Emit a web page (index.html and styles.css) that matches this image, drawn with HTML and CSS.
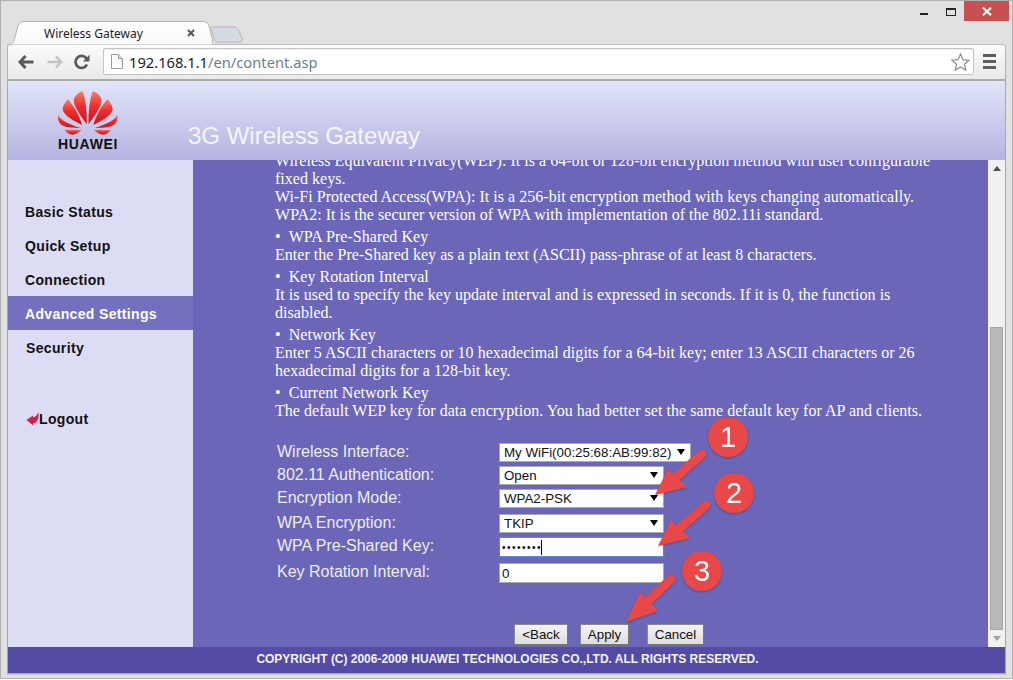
FILE: index.html
```html
<!DOCTYPE html>
<html lang="en">
<head>
<meta charset="utf-8">
<title>Wireless Gateway</title>
<link rel="stylesheet" href="styles.css">
</head>
<body>
<div class="window">
  <div class="titlebar">
    <div class="tabstrip">
      <div class="tab">
        <svg class="tab-shape" width="206" height="24" viewBox="0 0 206 24"><path d="M0.500 24 C6 24 7 20 8 16 L11 5 C12 2 14 0.500 17 0.500 L196 0.500 C199 0.500 201 2 202 5 L205 17 C206 21 206 24 206 24 Z" fill="url(#tabfill)" stroke="#b4b4b4"/><defs><linearGradient id="tabfill" x1="0" y1="0" x2="0" y2="1"><stop offset="0" stop-color="#ffffff"/><stop offset="1" stop-color="#f8f8f8"/></linearGradient></defs></svg>
        <span class="tab-title">Wireless Gateway</span>
        <svg class="tab-close" width="8" height="8" viewBox="0 0 8 8"><path d="M1 1 L7 7 M7 1 L1 7" stroke="#555" stroke-width="2"/></svg>
      </div>
      <svg class="newtab" width="34" height="17" viewBox="0 0 34 17"><path d="M1.500 1 L24 1 C26 1 27 2 28 3.500 L32.500 13 C33 15 32 16 30 16 L8 16 C6 16 5 15 4.500 13.500 L1 3 C0.700 1.700 0.700 1 1.500 1 Z" fill="#d6dae2" stroke="#b8b8b8"/></svg>
    </div>
    <div class="winctrls">
      <span class="ctrl-min"></span>
      <span class="ctrl-max"></span>
      <span class="ctrl-close"><svg width="10" height="9" viewBox="0 0 10 9"><path d="M1 0.800 L9 8.200 M9 0.800 L1 8.200" stroke="#fff" stroke-width="2"/></svg></span>
    </div>
  </div>

  <div class="toolbar">
    <svg class="tool" width="16" height="14" viewBox="0 0 16 14"><path d="M7.500 1 L2 7 L7.500 13 M2.500 7 L15.500 7" fill="none" stroke="#5a5a5a" stroke-width="3"/></svg>
    <svg class="tool tool-fwd" width="16" height="14" viewBox="0 0 16 14"><path d="M9 1.500 L14 7 L9 12.500 M13.500 7 L0.500 7" fill="none" stroke="#c4c4c4" stroke-width="2.600"/></svg>
    <svg class="tool" width="16" height="16" viewBox="0 0 16 16"><path d="M13 10.500 A6 6 0 1 1 12.500 4.500" fill="none" stroke="#5a5a5a" stroke-width="2.800"/><path d="M15.500 0.800 L15.500 7.500 L8.800 7.500 Z" fill="#5a5a5a"/></svg>
    <div class="omnibox">
      <svg class="pageicon" width="12" height="15" viewBox="0 0 12 15"><path d="M1 0.500 L7.500 0.500 L11.500 4.500 L11.500 14.500 L0.500 14.500 L0.500 0.500 Z" fill="#fff" stroke="#9a9a9a"/><path d="M7.500 0.500 L7.500 4.500 L11.500 4.500" fill="#e4e4e4" stroke="#9a9a9a"/></svg>
      <span class="url"><span class="url-host">192.168.1.1</span>/en/content.asp</span>
      <svg class="star" width="19" height="18" viewBox="0 0 19 18"><path d="M9.500 1 L11.900 6.700 L18 7.200 L13.400 11.200 L14.800 17.100 L9.500 14 L4.200 17.100 L5.600 11.200 L1 7.200 L7.100 6.700 Z" fill="#fff" stroke="#8e8e8e" stroke-width="1.200"/></svg>
    </div>
    <div class="hamburger"><i></i><i></i><i></i></div>
  </div>

  <div class="page">
    <header class="banner">
      <div class="brand">
        <svg class="logo" width="60" height="47" viewBox="0 0 180 141">
          <defs>
            <linearGradient id="petal" x1="0" y1="0" x2="0" y2="1"><stop offset="0" stop-color="#f4806c"/><stop offset="0.45" stop-color="#ee2c2c"/><stop offset="1" stop-color="#c8141c"/></linearGradient>
            <g id="half">
              <path d="M86 100 C64 68 41 38 49 21 C54 11 64 3 74 1 C82 23 88 63 86 100 Z"/>
              <path d="M72 102 C46 89 16 73 14 55 C14 45 22 33 30 25 C46 43 64 73 72 102 Z"/>
              <path d="M67 111 C41 102 6 88 0 71 C-2 83 1 95 12 103 C24 110 51 111 67 111 Z"/>
              <path d="M71 116 L20 116 C26 126 38 134 50 130 C58 127 66 121 71 116 Z"/>
            </g>
          </defs>
          <use href="#half" fill="url(#petal)"/>
          <use href="#half" fill="url(#petal)" transform="translate(178 0) scale(-1 1)"/>
        </svg>
        <span class="brand-name">HUAWEI</span>
      </div>
      <h1 class="banner-title">3G Wireless Gateway</h1>
    </header>

    <div class="middle">
      <nav class="sidebar">
        <a class="nav-item">Basic Status</a>
        <a class="nav-item">Quick Setup</a>
        <a class="nav-item">Connection</a>
        <a class="nav-item is-active">Advanced Settings</a>
        <a class="nav-item nudge">Security</a>
        <a class="nav-item logout nudge">
          <svg width="13" height="14" viewBox="0 0 13 14"><path d="M12.500 0 L12.500 4 C12.500 8 10 11 7 11.500 L7 13.500 L0.500 8 L7 3.500 L7 5.500 C9 5.500 11 3 12.500 0 Z" fill="#d81c4c"/></svg>Logout
        </a>
      </nav>

      <main class="content">
        <div class="help">
          <p>Wireless Equivalent Privacy(WEP): It is a 64-bit or 128-bit encryption method with user configurable fixed keys.</p>
          <p>Wi-Fi Protected Access(WPA): It is a 256-bit encryption method with keys changing automatically.</p>
          <p>WPA2: It is the securer version of WPA with implementation of the 802.11i standard.</p>
          <p class="topic">•&nbsp;&nbsp;WPA Pre-Shared Key</p>
          <p>Enter the Pre-Shared key as a plain text (ASCII) pass-phrase of at least 8 characters.</p>
          <p class="topic">•&nbsp;&nbsp;Key Rotation Interval</p>
          <p>It is used to specify the key update interval and is expressed in seconds. If it is 0, the function is disabled.</p>
          <p class="topic">•&nbsp;&nbsp;Network Key</p>
          <p>Enter 5 ASCII characters or 10 hexadecimal digits for a 64-bit key; enter 13 ASCII characters or 26 hexadecimal digits for a 128-bit key.</p>
          <p class="topic">•&nbsp;&nbsp;Current Network Key</p>
          <p>The default WEP key for data encryption. You had better set the same default key for AP and clients.</p>
        </div>

        <form class="settings">
          <label class="lbl">Wireless Interface:</label>
          <div class="pick pick-wide"><select class="ctl"><option>My WiFi(00:25:68:AB:99:82)</option></select></div>
          <label class="lbl">802.11 Authentication:</label>
          <div class="pick"><select class="ctl"><option>Open</option></select></div>
          <label class="lbl">Encryption Mode:</label>
          <div class="pick"><select class="ctl"><option>WPA2-PSK</option></select></div>
          <label class="lbl">WPA Encryption:</label>
          <div class="pick"><select class="ctl"><option>TKIP</option></select></div>
          <label class="lbl">WPA Pre-Shared Key:</label>
          <div class="pick pick-plain"><div class="ctl ctl-focus"><span class="dots">••••••••</span><span class="caret"></span></div></div>
          <label class="lbl">Key Rotation Interval:</label>
          <div class="pick pick-plain"><input class="ctl ctl-text" type="text" value="0"></div>
        </form>

        <div class="actions">
          <button class="btn btn-back" type="button">&lt;Back</button>
          <button class="btn btn-apply" type="button">Apply</button>
          <button class="btn btn-cancel" type="button">Cancel</button>
        </div>
      </main>

      <div class="scrollbar">
        <span class="sb-btn"><i class="tri-up"></i></span>
        <div class="sb-track"><div class="sb-thumb"></div></div>
        <span class="sb-btn sb-btn-down"><i class="tri-down"></i></span>
      </div>
    </div>

    <footer class="copyright">COPYRIGHT (C) 2006-2009 HUAWEI TECHNOLOGIES CO.,LTD. ALL RIGHTS RESERVED.</footer>
  </div>
</div>

<svg class="callouts" width="1013" height="680" viewBox="0 0 1013 680">
  <g class="callout">
    <path d="M702 454 L675 478" stroke="#e84848" stroke-width="9" stroke-linecap="round"/>
    <polygon points="655,495 687,487 668,469" fill="#e84848"/>
    <circle cx="728" cy="437" r="20" fill="#e84848"/>
    <text x="728" y="447" class="num">1</text>
  </g>
  <g class="callout">
    <path d="M706 505 L679 529" stroke="#e84848" stroke-width="9" stroke-linecap="round"/>
    <polygon points="658,546 690,538 671,520" fill="#e84848"/>
    <circle cx="734" cy="493" r="20" fill="#e84848"/>
    <text x="734" y="503" class="num">2</text>
  </g>
  <g class="callout">
    <path d="M671 579 L647 602" stroke="#e84848" stroke-width="9" stroke-linecap="round"/>
    <polygon points="626,622 658,611 640,592" fill="#e84848"/>
    <circle cx="702" cy="571" r="20" fill="#e84848"/>
    <text x="702" y="581" class="num">3</text>
  </g>
</svg>
</body>
</html>
```

FILE: styles.css
```css
* { box-sizing: border-box; }
html, body { margin: 0; padding: 0; height: 100%; overflow: hidden; background: #fff; }
body { font-family: "Liberation Sans", Arial, sans-serif; position: relative; }

.window {
  width: 1013px;
  height: 679px;
  background: #e1e1e1;
  border: 1px solid #b0b0b0;
  display: flex;
  flex-direction: column;
  padding: 0 6px 4px 6px;
}

/* title bar */
.titlebar { height: 43px; display: flex; justify-content: space-between; flex: none; }
.tabstrip { display: flex; align-items: flex-start; padding-top: 20px; }
.tab {
  position: relative;
  width: 206px;
  height: 24px;
  display: flex;
  align-items: center;
  padding: 0 18px 0 37px;
  justify-content: space-between;
}
.tab-shape { position: absolute; left: 0; top: 0; }
.tab-title { position: relative; font: 12px "Noto Sans", "Open Sans", sans-serif; color: #222; }
.tab-close { position: relative; }
.newtab { margin: 5px 0 0 -3px; }

.winctrls { display: flex; align-items: flex-start; margin-right: -3px; }
.ctrl-min { width: 8px; height: 2px; background: #222; margin-top: 12px; }
.ctrl-max { width: 10px; height: 8px; border: 1px solid #222; border-top-width: 2px; margin: 7px 0 0 18px; }
.ctrl-close {
  width: 45px;
  height: 20px;
  background: #c75050;
  margin-left: 8px;
  display: flex;
  align-items: center;
  justify-content: center;
}

/* toolbar */
.toolbar {
  height: 37px;
  flex: none;
  background: linear-gradient(#fbfbfb, #e9e9e9);
  border: 1px solid #b4b4b4;
  border-top-color: #bcbcbc;
  border-bottom-color: #ababab;
  border-bottom-width: 2px;
  border-radius: 3px 3px 0 0;
  display: flex;
  align-items: center;
  padding: 0 9px 1px 10px;
}
.tool { flex: none; margin-right: 12px; }
.tool-fwd { margin-left: 1px; margin-right: 11px; }
.omnibox {
  margin-left: 1px;
  flex: 1;
  height: 27px;
  background: #fff;
  border: 1px solid #c4c4c4;
  border-radius: 2px;
  display: flex;
  align-items: center;
  padding: 0 3px 0 7px;
  box-shadow: inset 0 1px 0 #eee;
}
.pageicon { flex: none; }
.url { flex: 1; margin-left: 6px; font: 14.700px "Noto Sans", "Open Sans", sans-serif; color: #6d7f90; white-space: nowrap; }
.url-host { color: #222; }
.hamburger { width: 13px; margin-left: 9px; display: flex; flex-direction: column; gap: 3px; flex: none; }
.hamburger i { display: block; height: 3px; background: #5e5e5e; }

/* router page */
.page {
  flex: 1;
  display: flex;
  flex-direction: column;
  min-height: 0;
  border: 1px solid #a8a8a8;
  border-top: 0;
  box-shadow: 0 1px 0 #cdcdcd;
}
.banner {
  height: 79px;
  flex: none;
  background: linear-gradient(#e1e5f9, #b6b4e1);
  display: flex;
  padding-left: 50px;
}
.brand { width: 130px; display: flex; flex-direction: column; align-items: flex-start; padding-top: 10px; flex: none; }
.logo { display: block; }
.brand-name { font-size: 14px; font-weight: bold; color: #111; letter-spacing: 0.700px; line-height: 14px; margin-top: -1px; }
.banner-title { margin: 41px 0 0; font-size: 24px; font-weight: normal; color: #f6f6ff; line-height: 28px; }

.middle { flex: 1; display: flex; min-height: 0; }
.sidebar { width: 185px; flex: none; background: #dcdcf4; padding-top: 34px; display: flex; flex-direction: column; }
.nav-item {
  height: 34px;
  flex: none;
  display: flex;
  align-items: center;
  padding: 2px 0 0 17px;
  font-size: 14px;
  font-weight: bold;
  color: #111;
  letter-spacing: 0.350px;
}
.nav-item.is-active { background: #7370c0; color: #fff; }
.nudge { padding-left: 18px; }
.logout { margin-top: 37px; color: #111; }

.content { width: 795px; flex: none; background: #6b66b8; overflow: hidden; padding-left: 82px; color: #fff; }
.help { width: 657px; margin-top: -8px; font: 16px/18px "Liberation Serif", "Times New Roman", serif; letter-spacing: 0.030px; }
.help p { margin: 0; }
.help .topic { margin-top: 4px; }

.settings {
  margin: 23px 0 0 2px;
  display: grid;
  grid-template-columns: 222px 1fr;
  grid-template-rows: 23px 23px 25px 23px 26px 20px;
  align-items: start;
}
.lbl { font-size: 16px; line-height: 17px; color: #eeeeee; }
.pick { position: relative; width: 165px; height: 19px; }
.pick-wide { width: 192px; }
.pick::after {
  content: "";
  position: absolute;
  right: 6px;
  top: 6px;
  border: 4px solid transparent;
  border-top: 6px solid #000;
  border-bottom: 0;
  pointer-events: none;
}
.pick-plain::after { display: none; }
.ctl {
  display: block;
  width: 100%;
  height: 19px;
  padding: 0 0 0 4px;
  margin: 0;
  border: 1px solid #a9a9a9;
  border-radius: 0;
  background: #fff;
  color: #111;
  font: 13.330px "Liberation Sans", Arial, sans-serif;
  appearance: none;
  outline: 0;
}
.ctl-focus {
  height: 20px;
  border-color: #5b86d8;
  box-shadow: 0 0 1px #5b86d8;
  display: flex;
  align-items: center;
  padding-left: 2px;
}
.dots { font-size: 10px; letter-spacing: 1.500px; color: #000; }
.caret { width: 1px; height: 15px; background: #000; margin-left: -1px; }
.ctl-text { height: 20px; padding-left: 2px; }

.actions { margin: 41px 0 0 239px; display: flex; }
.btn {
  height: 21px;
  padding: 0;
  border: 1px solid #8a8a8a;
  border-right-color: #777;
  border-bottom-color: #777;
  border-radius: 0;
  background: linear-gradient(#f4f4f4, #dedede);
  color: #111;
  font: 13.330px "Liberation Sans", Arial, sans-serif;
}
.btn-back { width: 54px; }
.btn-apply { width: 49px; margin-left: 12px; }
.btn-cancel { width: 57px; margin-left: 18px; }

.scrollbar { width: 17px; flex: none; background: #f1f1f1; display: flex; flex-direction: column; }
.sb-btn { height: 17px; flex: none; display: flex; align-items: center; justify-content: center; }
.tri-up { border: 4px solid transparent; border-top: 0; border-bottom: 5px solid #505050; }
.tri-down { border: 4px solid transparent; border-bottom: 0; border-top: 5px solid #a3a3a3; }
.sb-track { flex: 1; padding: 150px 2px 0; display: flex; }
.sb-thumb { flex: 1; background: #b9b9b9; border: 1px solid #a5a5a5; }

.copyright {
  height: 26px;
  flex: none;
  background: #544ca4;
  color: #f2f2f2;
  font-size: 12px;
  font-weight: bold;
  line-height: 24px;
  text-align: center;
  padding-left: 2px;
  letter-spacing: -0.020px;
}

/* callouts drawn over the screenshot */
.callouts { position: absolute; left: 0; top: 0; pointer-events: none; }
.callout { filter: drop-shadow(0 1px 1px rgba(0,0,0,0.25)); }
.num { font: 29px "Liberation Sans", Arial, sans-serif; fill: #fff; text-anchor: middle; }
```
